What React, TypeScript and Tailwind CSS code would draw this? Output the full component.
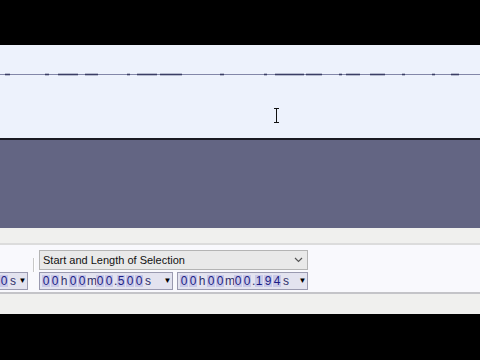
import * as React from 'react';

// dark bits of the waveform sitting on the flat line: [x, width]
const blips: [number, number][] = [
  [5, 5], [45, 4], [58, 20], [85, 13], [127, 3], [137, 20], [160, 22], [220, 4],
  [264, 3], [275, 29], [306, 16], [339, 3], [346, 14], [370, 15], [402, 3], [432, 3], [451, 8],
];

function Waveform() {
  return (
    <svg width="480" height="93" viewBox="0 0 480 93" className="block">
      <line x1="0" y1="29.5" x2="480" y2="29.5" stroke="#8387a8" strokeWidth="1" />
      {blips.map(([x, w]) => (
        <rect key={x} x={x} y={28.7} width={w} height={1.6} fill="#3a3d64" />
      ))}
      {/* I-beam cursor */}
      <g stroke="#111" strokeWidth="1" fill="none">
        <line x1="276.5" y1="64" x2="276.5" y2="77" />
        <line x1="274" y1="63.5" x2="279" y2="63.5" />
        <line x1="274" y1="77.5" x2="279" y2="77.5" />
      </g>
    </svg>
  );
}

function TimeText({ value }: { value: string }) {
  return (
    <div className="flex h-[18px] items-center gap-[1px] border border-[#9a9ab0] bg-[#e3e3ef] pl-[2px]">
      {value.split('').map((c, i) => {
        const unit = c === 'h' || c === 'm' || c === 's';
        const dot = c === '.';
        return (
          <span
            key={i}
            className={
              unit
                ? 'w-[8px] shrink-0 text-center text-[#30306a]'
                : dot
                  ? 'w-[2px] shrink-0 text-center text-[#30306a]'
                  : 'w-[8px] shrink-0 bg-[#c9c9e8] text-center text-[#1d1d86]'
            }
          >
            {c}
          </span>
        );
      })}
      <span className="ml-auto w-[9px] shrink-0 text-center text-[8px] text-black">▼</span>
    </div>
  );
}

export default function App() {
  return (
    <div className="flex h-[360px] w-[480px] flex-col overflow-hidden bg-black font-['Liberation_Sans',Arial,sans-serif]">
      <div className="h-[45px] shrink-0 bg-black" />
      <div className="h-[93px] shrink-0 bg-[#edf2fc]">
        <Waveform />
      </div>
      <div className="h-[2px] shrink-0 bg-[#1a1a22]" />
      <div className="h-[88px] shrink-0 bg-[#636583]" />
      <div className="h-[15px] shrink-0 bg-[#f0f0ee]" />
      <div className="h-[2px] shrink-0 bg-[#dcdcdc]" />

      {/* selection toolbar */}
      <div className="flex h-[47px] shrink-0 items-start bg-[#f9f9fd] pt-[5px] text-[12px] leading-none">
        <div className="flex w-[28px] shrink-0 flex-col pt-[22px]">
          <div className="flex h-[18px] items-center justify-end gap-[1px] border-y border-r border-[#9a9ab0] bg-[#e3e3ef]">
            <span className="w-[8px] bg-[#c9c9e8] text-center text-[#1d1d86]">0</span>
            <span className="w-[8px] text-center text-[#30306a]">s</span>
            <span className="w-[9px] text-center text-[8px] text-black">▼</span>
          </div>
        </div>
        <div className="ml-[5px] mt-[8px] h-[14px] w-[2px] shrink-0 border-x border-l-[#c8c8c8] border-r-white" />
        <div className="ml-[4px] flex w-[269px] shrink-0 flex-col gap-[2px]">
          <div className="flex h-[20px] items-center justify-between border border-[#b4b4b4] bg-[#e9e9e9] pl-[3px] pr-[4px] text-[11px] text-[#111]">
            <span>Start and Length of Selection</span>
            <svg width="9" height="6" viewBox="0 0 9 6">
              <path d="M1 1l3.5 3.5L8 1" stroke="#555" strokeWidth="1.2" fill="none" />
            </svg>
          </div>
          <div className="flex gap-[4px]">
            <div className="w-[134px]">
              <TimeText value="00h00m00.500s" />
            </div>
            <div className="w-[131px]">
              <TimeText value="00h00m00.194s" />
            </div>
          </div>
        </div>
      </div>
      <div className="h-[2px] shrink-0 bg-[#c4c4c8]" />
      <div className="h-[20px] shrink-0 bg-[#f0f0ee]" />
      <div className="flex-1 bg-black" />
    </div>
  );
}
